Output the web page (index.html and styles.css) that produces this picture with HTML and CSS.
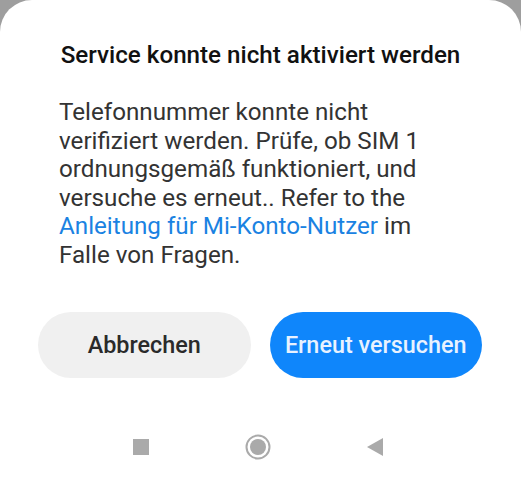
FILE: index.html
```html
<!DOCTYPE html>
<html lang="de">
<head>
<meta charset="utf-8">
<link rel="stylesheet" href="styles.css">
</head>
<body>
<div class="sheet">
  <h1 class="title">Service konnte nicht aktiviert werden</h1>
  <p class="message">Telefonnummer konnte nicht verifiziert werden. Prüfe, ob SIM 1 ordnungsgemäß funktioniert, und versuche es erneut.. Refer to the <a class="link">Anleitung für Mi-Konto-Nutzer</a> im Falle von Fragen.</p>
  <div class="actions">
    <button class="btn btn-cancel">Abbrechen</button>
    <button class="btn btn-retry">Erneut versuchen</button>
  </div>
  <nav class="navbar">
    <svg class="nav-icon" width="18" height="18" viewBox="0 0 18 18"><rect x="1" y="1" width="16" height="16" fill="#aaaaaa"/></svg>
    <svg class="nav-icon" width="26" height="26" viewBox="0 0 26 26"><circle cx="13" cy="13" r="11.5" fill="none" stroke="#aaaaaa" stroke-width="2"/><circle cx="13" cy="13" r="8" fill="#aaaaaa"/></svg>
    <svg class="nav-icon" width="18" height="20" viewBox="0 0 18 20"><polygon points="1,10 17,1 17,19" fill="#aaaaaa"/></svg>
  </nav>
</div>
</body>
</html>
```
FILE: styles.css
```css
html, body {
  margin: 0;
  padding: 0;
  background: #9e9e9e;
}
body {
  width: 521px;
  height: 480px;
  overflow: hidden;
  font-family: Roboto, "Noto Sans", sans-serif;
}
.sheet {
  background: #ffffff;
  border-radius: 32px 32px 0 0;
  height: 480px;
  box-sizing: border-box;
  padding-top: 40px;
  display: flex;
  flex-direction: column;
}
.title {
  margin: 0;
  text-align: center;
  font-size: 24.2px;
  font-weight: 500;
  color: #111111;
  line-height: 30px;
}
.message {
  margin: 28px 0 0 59px;
  width: 364px;
  font-size: 24.2px;
  line-height: 28.5px;
  color: #333333;
}
.link {
  color: #1a82e2;
  white-space: nowrap;
}
.actions {
  margin-top: 43px;
  padding: 0 39px 0 38px;
  display: flex;
  gap: 19px;
}
.btn {
  flex: 1;
  height: 66px;
  border: none;
  border-radius: 33px;
  font-family: Roboto, "Noto Sans", sans-serif;
  font-size: 23.4px;
  font-weight: 500;
  padding: 0;
}
.btn-cancel {
  background: #f0f0f0;
  color: #2a2a2a;
}
.btn-retry {
  background: #0f86fb;
  color: #e8f2ff;
}
.navbar {
  margin-top: 56px;
  display: flex;
  justify-content: space-between;
  align-items: center;
  padding: 0 137px 0 132px;
}
.nav-icon {
  display: block;
}
```
